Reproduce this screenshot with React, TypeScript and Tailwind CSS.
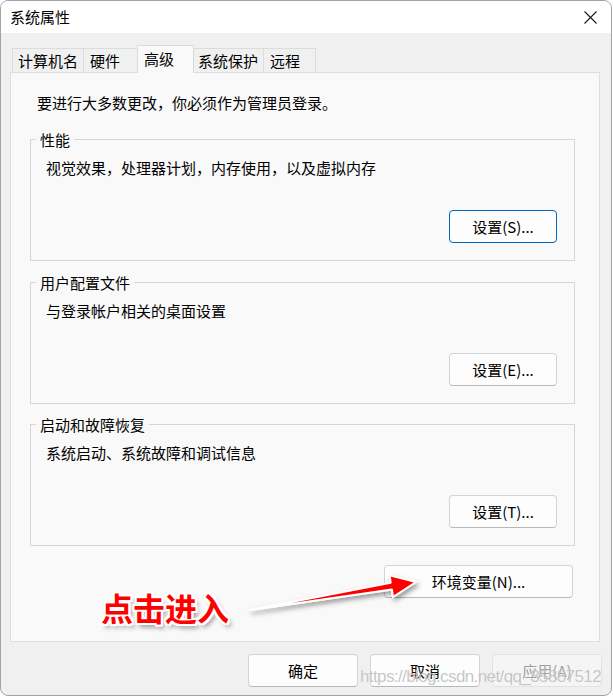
import React from 'react';

const font = "font-['Noto_Sans_CJK_SC','Noto_Sans',sans-serif]";

type BtnProps = { label: string; width: string; primary?: boolean; disabled?: boolean };

const WinButton: React.FC<BtnProps> = ({ label, width, primary, disabled }) => {
  let cls = 'bg-[#fdfdfd] border-[#d4d4d4] border-b-[#b8b8b8] text-black';
  if (primary) cls = 'bg-[#fdfdfd] border-[#0067c0] text-black';
  if (disabled) cls = 'bg-[#f5f5f5] border-[#e2e2e2] text-[#a0a0a0]';
  return (
    <div className={`${width} h-[33px] flex items-center justify-center rounded-[4px] border text-[15px] leading-[20px] ${cls}`}>
      {label}
    </div>
  );
};

type GroupProps = { title: string; text: string; button: string; primary?: boolean; className?: string };

const Group: React.FC<GroupProps> = ({ title, text, button, primary, className }) => (
  <div className={`w-[545px] h-[122px] border border-[#d6d6d6] ${className ?? ''}`}>
    <div className="-mt-[10px] ml-[5px] w-fit px-[4px] bg-[#f9f9f9] leading-[20px]">{title}</div>
    <div className="mt-[8px] pl-[15px] leading-[20px]">{text}</div>
    <div className="mt-[32px] pr-[17px] flex justify-end">
      <WinButton label={button} width="w-[108px]" primary={primary} />
    </div>
  </div>
);

const tabs = [
  { name: '计算机名', w: 'w-[71px] pl-[5px] border-l' },
  { name: '硬件', w: 'w-[54px] pl-[6px] border-l' },
  { name: '高级', w: 'w-[57px] pl-[6px] border-l border-r', active: true },
  { name: '系统保护', w: 'w-[69px] pl-[4px]' },
  { name: '远程', w: 'w-[53px] pl-[6px] border-l border-r' },
];

export default function App() {
  return (
    <div className={`relative w-[613px] h-[697px] bg-white text-[15px] text-black ${font}`}>
      <div className="w-[612px] h-[696px] rounded-[8px] border border-[#a3a3a3] overflow-hidden bg-[#f0f0f0] flex flex-col">
        {/* title bar */}
        <div className="h-[32px] bg-white flex items-center justify-between pl-[9px] pr-[14px]">
          <span className="leading-[20px]">系统属性</span>
          <svg width="13" height="13" viewBox="0 0 13 13">
            <path d="M0.5 0.5 L12.5 12.5 M12.5 0.5 L0.5 12.5" stroke="#1a1a1a" strokeWidth="1.1" />
          </svg>
        </div>

        {/* tabs */}
        <div className="mt-[12px] ml-[11px] h-[27px] flex items-end">
          {tabs.map((t) =>
            t.active ? (
              <div
                key={t.name}
                className={`${t.w} relative z-10 h-[28px] -mb-px flex items-center pb-[2px] border-t border-[#dcdcdc] bg-[#f9f9f9] leading-[20px]`}
              >
                {t.name}
              </div>
            ) : (
              <div
                key={t.name}
                className={`${t.w} h-[24px] flex items-center border-t border-[#dcdcdc] bg-[#f0f0f0] leading-[20px]`}
              >
                {t.name}
              </div>
            )
          )}
        </div>

        {/* panel */}
        <div className="ml-[9px] w-[590px] h-[570px] border border-[#dedede] bg-[#f9f9f9] pt-[20px] pl-[19px] pr-[24px]">
          <div className="ml-[7px] leading-[20px]">要进行大多数更改，你必须作为管理员登录。</div>
          <Group
            className="mt-[26px]"
            title="性能"
            text="视觉效果，处理器计划，内存使用，以及虚拟内存"
            button="设置(S)..."
            primary
          />
          <Group className="mt-[21px]" title="用户配置文件" text="与登录帐户相关的桌面设置" button="设置(E)..." />
          <Group className="mt-[20px]" title="启动和故障恢复" text="系统启动、系统故障和调试信息" button="设置(T)..." />
          <div className="mt-[19px] flex justify-end pr-[2px]">
            <WinButton label="环境变量(N)..." width="w-[189px]" />
          </div>
        </div>

        {/* bottom buttons */}
        <div className="mt-[12px] flex justify-end gap-[12px] pr-[9px]">
          <WinButton label="确定" width="w-[110px]" />
          <WinButton label="取消" width="w-[110px]" />
          <WinButton label="应用(A)" width="w-[110px]" disabled />
        </div>
      </div>

      {/* annotation arrow */}
      <svg className="absolute left-0 top-0 pointer-events-none" width="613" height="697" viewBox="0 0 613 697">
        <defs>
          <filter id="sh" x="-10%" y="-50%" width="130%" height="200%">
            <feDropShadow dx="2" dy="3" stdDeviation="2.5" floodColor="#000" floodOpacity="0.4" />
          </filter>
        </defs>
        <polygon
          points="250,610 390.7,582.7 389.6,575.4 416,582 393,597 391.9,589.6"
          fill="#ff0000"
          stroke="#ffffff"
          strokeWidth="2"
          strokeLinejoin="round"
          filter="url(#sh)"
        />
      </svg>

      <div className="absolute left-[101px] top-[591px] text-[32px] leading-none font-bold text-[#ff0000] [text-shadow:-2px_-2px_0_#fff,2px_-2px_0_#fff,-2px_2px_0_#fff,2px_2px_0_#fff,0_-2px_0_#fff,0_2px_0_#fff,-2px_0_0_#fff,2px_0_0_#fff,3px_4px_5px_rgba(0,0,0,0.45)]">
        点击进入
      </div>

      {/* watermark */}
      <div className="absolute left-[360px] top-[666px] text-[17px] leading-[22px] tracking-[-0.6px] whitespace-nowrap font-['Liberation_Sans',sans-serif] text-[rgba(150,150,150,0.55)] [text-shadow:0_0_1px_rgba(255,255,255,0.9)]">
        https://blog.csdn.net/qq_35887512
      </div>
    </div>
  );
}
